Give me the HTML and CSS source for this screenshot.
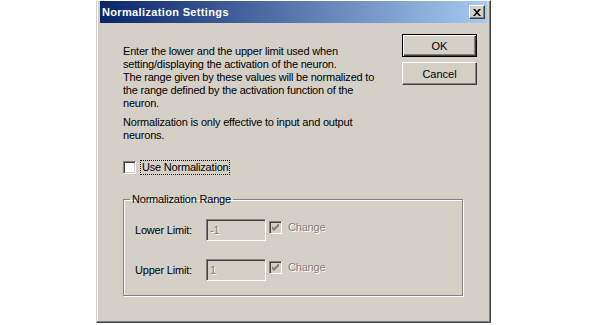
FILE: index.html
```html
<!DOCTYPE html>
<html lang="en">
<head>
    <meta charset="UTF-8">
    <title>Normalization Settings</title>
    <link rel="stylesheet" href="styles.css">
</head>
<body>
    <div class="dialog">
        <div class="titlebar">
            <span class="title">Normalization Settings</span>
            <button class="close-btn" aria-label="Close">
                <svg width="8" height="7" viewBox="0 0 8 7">
                    <path d="M0 0h2l2 2.2L6 0h2L5 3.5 8 7H6L4 4.8 2 7H0l3-3.5z" fill="#000"/>
                </svg>
            </button>
        </div>

        <div class="client">
            <div class="intro">
                <p>Enter the lower and the upper limit used when<br>setting/displaying the activation of the neuron.<br>The range given by these values will be normalized to<br>the range defined by the activation function of the<br>neuron.</p>
                <p>Normalization is only effective to input and output<br>neurons.</p>
            </div>

            <div class="buttons">
                <button class="btn btn-default">OK</button>
                <button class="btn">Cancel</button>
            </div>

            <label class="check-row">
                <span class="checkbox"></span>
                <span class="focus-label">Use Normalization</span>
            </label>

            <fieldset class="group">
                <legend>Normalization Range</legend>
                <div class="limit-row">
                    <span class="limit-label">Lower Limit:</span>
                    <span class="field">-1</span>
                    <span class="checkbox checkbox-disabled">
                        <svg width="7" height="7" viewBox="0 0 7 7"><path d="M0 2v3l2 2 5-5V-1L2 4z" fill="#808080"/></svg>
                    </span>
                    <span class="disabled-text">Change</span>
                </div>
                <div class="limit-row">
                    <span class="limit-label">Upper Limit:</span>
                    <span class="field">1</span>
                    <span class="checkbox checkbox-disabled">
                        <svg width="7" height="7" viewBox="0 0 7 7"><path d="M0 2v3l2 2 5-5V-1L2 4z" fill="#808080"/></svg>
                    </span>
                    <span class="disabled-text">Change</span>
                </div>
            </fieldset>
        </div>
    </div>
</body>
</html>
```

FILE: styles.css
```css
:root {
    --face: #d4d0c8;
    --shadow: #808080;
    --dark: #404040;
    --light: #ffffff;
}

* {
    box-sizing: border-box;
    margin: 0;
    padding: 0;
}

body {
    background: #ffffff;
    font-family: 'Liberation Sans', Arial, sans-serif;
    font-size: 11px;
    letter-spacing: -0.2px;
    color: #000;
}

/* window frame */
.dialog {
    width: 395px;
    height: 323px;
    margin-left: 96px;
    background: var(--face);
    border: 1px solid;
    border-color: var(--light) var(--dark) var(--dark) var(--face);
    box-shadow: inset -1px -1px 0 var(--shadow), inset 1px 0 0 var(--light);
    padding: 0 3px 3px 3px;
}

.titlebar {
    display: flex;
    align-items: center;
    justify-content: space-between;
    height: 22px;
    padding: 0 2px 0 2px;
    background: linear-gradient(to right, #0a246a, #a6caf0);
}

.title {
    color: #fff;
    font-weight: bold;
    font-size: 11px;
    letter-spacing: 0.35px;
}

.close-btn {
    display: flex;
    align-items: center;
    justify-content: center;
    width: 16px;
    height: 14px;
    background: var(--face);
    border: 1px solid;
    border-color: var(--light) var(--dark) var(--dark) var(--light);
    box-shadow: inset -1px -1px 0 var(--shadow);
}

/* client area */
.client {
    display: grid;
    grid-template-columns: 1fr 75px;
    padding: 11px 10px 0 23px;
}

.intro {
    padding-top: 11px;
    line-height: 13px;
    white-space: nowrap;
}

.intro p + p {
    margin-top: 6px;
}

.buttons {
    display: flex;
    flex-direction: column;
    gap: 5px;
}

.btn {
    height: 23px;
    font-family: inherit;
    font-size: 11px;
    color: #000;
    background: var(--face);
    border: 1px solid;
    border-color: var(--light) var(--dark) var(--dark) var(--light);
    box-shadow: inset -1px -1px 0 var(--shadow);
}

.btn-default {
    border: 1px solid #000;
    box-shadow: inset 1px 1px 0 var(--light), inset -1px -1px 0 var(--dark), inset -2px -2px 0 var(--shadow);
}

.check-row {
    grid-column: 1;
    display: flex;
    align-items: center;
    gap: 5px;
    margin-top: 18px;
    height: 15px;
}

.checkbox {
    display: flex;
    align-items: center;
    justify-content: center;
    width: 13px;
    height: 13px;
    background: #fff;
    border: 1px solid;
    border-color: var(--shadow) var(--light) var(--light) var(--shadow);
    box-shadow: inset 1px 1px 0 var(--dark), inset -1px -1px 0 var(--face);
}

.focus-label {
    line-height: 13px;
    padding: 0 1px;
    outline: 1px dotted #000;
}

/* group box */
.group {
    grid-column: 1 / -1;
    width: 340px;
    margin-top: 18px;
    padding: 13px 10px 14px 11px;
    border: 1px solid var(--shadow);
    box-shadow: inset 1px 1px 0 var(--light), 1px 1px 0 var(--light);
}

.group legend {
    margin-left: -5px;
    padding: 0 2px;
    line-height: 13px;
}

.limit-row {
    display: flex;
    align-items: flex-start;
}

.limit-row + .limit-row {
    margin-top: 18px;
}

.limit-label {
    width: 71px;
    line-height: 22px;
}

.field {
    width: 60px;
    height: 22px;
    padding-left: 3px;
    line-height: 20px;
    color: var(--shadow);
    text-shadow: 1px 1px 0 var(--light);
    border: 1px solid;
    border-color: var(--shadow) var(--light) var(--light) var(--shadow);
    box-shadow: inset 1px 1px 0 var(--dark), inset -1px -1px 0 var(--face);
}

.checkbox-disabled {
    background: var(--face);
    margin: 2px 6px 0 3px;
}

.disabled-text {
    line-height: 17px;
    color: var(--shadow);
    text-shadow: 1px 1px 0 var(--light);
}
```
